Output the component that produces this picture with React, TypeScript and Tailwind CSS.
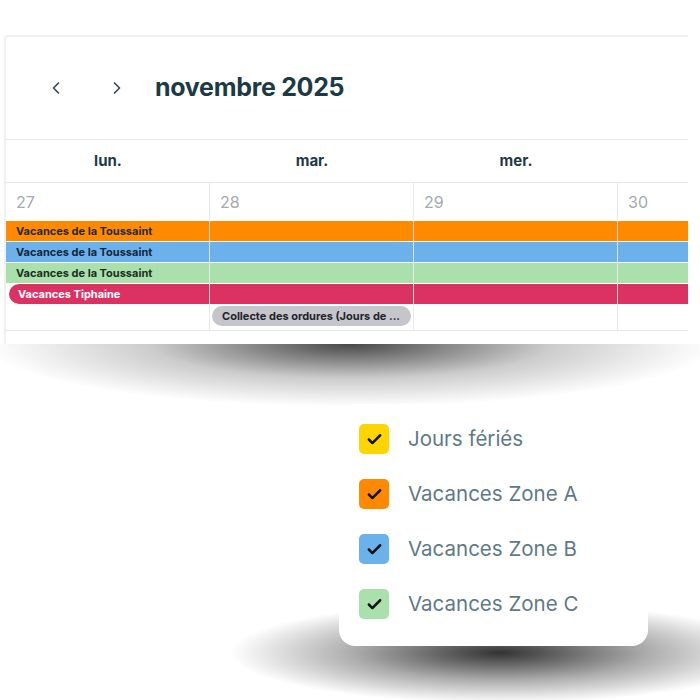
import { Check, ChevronLeft, ChevronRight } from 'lucide-react';

const days = [
  { label: 'lun.', num: '27' },
  { label: 'mar.', num: '28' },
  { label: 'mer.', num: '29' },
  { label: '', num: '30' },
];

const legend = [
  { label: 'Jours fériés', color: 'bg-[#ffd500]' },
  { label: 'Vacances Zone A', color: 'bg-[#ff8a00]' },
  { label: 'Vacances Zone B', color: 'bg-[#6bb1ec]' },
  { label: 'Vacances Zone C', color: 'bg-[#aae0ac]' },
];

function DayCell({ num, index }: { num: string; index: number }) {
  const first = index === 0;
  return (
    <div className="border-r border-[#e6e8ea] h-[148px] border-b">
      <div className="h-[38px] pl-[10px] pt-[9px] text-[16px] leading-[20px] text-[#a3aab2]">
        {num}
      </div>
      <div className="flex flex-col gap-[1px]">
        <div className="h-[20px] bg-[#ff8a00] pl-[10px] text-[11px] font-bold leading-[20px] text-[#1f2a30]">
          {first && 'Vacances de la Toussaint'}
        </div>
        <div className="h-[20px] bg-[#6bb1ec] pl-[10px] text-[11px] font-bold leading-[20px] text-[#15253a]">
          {first && 'Vacances de la Toussaint'}
        </div>
        <div className="h-[20px] bg-[#aae0ac] pl-[10px] text-[11px] font-bold leading-[20px] text-[#1c2e22]">
          {first && 'Vacances de la Toussaint'}
        </div>
        <div
          className={
            first
              ? 'h-[20px] ml-[3px] rounded-l-full bg-[#dc3263] pl-[9px] text-[11px] font-bold leading-[20px] text-white'
              : 'h-[20px] bg-[#dc3263]'
          }
        >
          {first && 'Vacances Tiphaine'}
        </div>
        <div className="h-[20px] mt-[1px]">
          {index === 1 && (
            <div className="mx-[2px] h-[20px] rounded-full bg-[#c5c6cc] px-[10px] text-[11px] font-bold leading-[20px] text-[#1f2429] truncate">
              Collecte des ordures (Jours de ...
            </div>
          )}
        </div>
      </div>
    </div>
  );
}

export default function App() {
  return (
    <div className="relative w-[700px] h-[700px] overflow-hidden bg-white font-['Inter',sans-serif]">
      {/* ombres décoratives */}
      <div className="absolute left-0 top-[344px] w-[700px] h-[66px] bg-[radial-gradient(ellipse_52%_95%_at_50%_0%,rgba(0,0,0,0.72),rgba(0,0,0,0.2)_55%,rgba(0,0,0,0)_100%)]" />
      <div className="absolute left-[230px] top-[595px] w-[540px] h-[105px] bg-[radial-gradient(ellipse_50%_48%_at_50%_55%,rgba(0,0,0,0.8),rgba(0,0,0,0.32)_55%,rgba(0,0,0,0)_100%)]" />

      <div className="relative pt-[35px] pl-[4px]">
        <div className="w-[684px] h-[309px] overflow-hidden border-t-2 border-l-2 border-[#eef1f1] rounded-tl-[4px] bg-white">
          <div className="h-[102px] flex items-center pl-[40px]">
            <ChevronLeft size={20} strokeWidth={2} className="text-[#3d4650]" />
            <ChevronRight size={20} strokeWidth={2} className="ml-[41px] text-[#3d4650]" />
            <h1 className="ml-[28px] text-[25px] font-bold text-[#1c3a45] tracking-[-0.3px]">
              novembre 2025
            </h1>
          </div>
          <div className="grid grid-cols-[204px_204px_204px_204px] border-t border-[#e6e8ea]">
            {days.map((d) => (
              <div
                key={d.num}
                className="h-[43px] flex items-center justify-center text-[15px] font-bold text-[#1c3a45] border-b border-[#e6e8ea]"
              >
                {d.label}
              </div>
            ))}
            {days.map((d, i) => (
              <DayCell key={d.num} num={d.num} index={i} />
            ))}
          </div>
        </div>
      </div>

      <div className="relative mt-[60px] ml-[339px] w-[309px] rounded-2xl bg-white pt-[20px] pb-[27px] pl-[20px]">
        <div className="flex flex-col gap-[25px]">
          {legend.map((l) => (
            <div key={l.label} className="flex h-[30px] items-center gap-[19px]">
              <div className={`w-[30px] h-[30px] rounded-[5px] ${l.color} flex items-center justify-center`}>
                <Check size={17} strokeWidth={3.5} className="text-[#111]" />
              </div>
              <span className="text-[20.5px] leading-[30px] text-[#5e7a86]">{l.label}</span>
            </div>
          ))}
        </div>
      </div>
    </div>
  );
}
